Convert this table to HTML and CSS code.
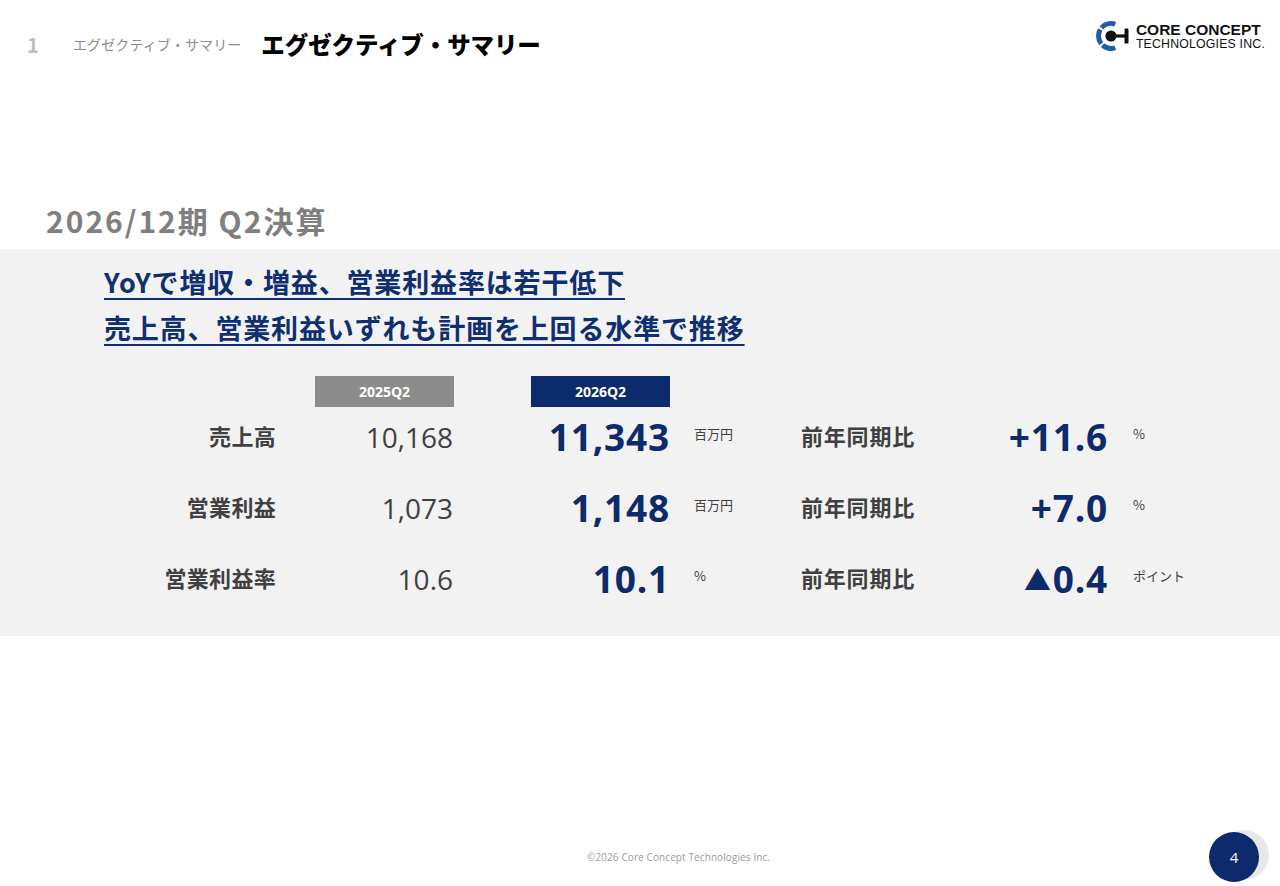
FILE: index.html
```html
<!DOCTYPE html>
<html lang="ja">
<head>
<meta charset="utf-8">
<title>エグゼクティブ・サマリー</title>
<link rel="stylesheet" href="styles.css">
</head>
<body>
<div class="slide">
  <header class="top">
    <span class="sec-num">1</span>
    <span class="sec-sub">エグゼクティブ・サマリー</span>
    <h1 class="sec-title">エグゼクティブ・サマリー</h1>
    <div class="logo">
      <svg class="logo-mark" width="36" height="34" viewBox="0 0 36 34">
        <path d="M21.28 5.25 A12.5 12.5 0 1 0 21.28 28.75" fill="none" stroke="#1f5da8" stroke-width="5" stroke-dasharray="15 2 15 2 16"/>
        <circle cx="17" cy="17" r="5.6" fill="#111"/>
        <rect x="17" y="15.4" width="14" height="3.2" fill="#111"/>
        <rect x="30.5" y="9.5" width="4" height="15" rx="1.2" fill="#111"/>
      </svg>
      <div class="logo-text">
        <span class="logo-l1">CORE CONCEPT</span>
        <span class="logo-l2">TECHNOLOGIES INC.</span>
      </div>
    </div>
  </header>

  <h2 class="period">2026/12期 Q2決算</h2>

  <section class="panel">
    <div class="headline">
      <p>YoYで増収・増益、営業利益率は若干低下</p>
      <p>売上高、営業利益いずれも計画を上回る水準で推移</p>
    </div>

    <div class="kpi">
      <div></div>
      <div class="cell-r"><span class="tag tag-prev">2025Q2</span></div>
      <div class="cell-r"><span class="tag tag-cur">2026Q2</span></div>
      <div></div><div></div><div></div><div></div>

      <div class="label">売上高</div>
      <div class="prev">10,168</div>
      <div class="cur">11,343</div>
      <div class="unit">百万円</div>
      <div class="label2">前年同期比</div>
      <div class="cur">+11.6</div>
      <div class="unit2">%</div>

      <div class="label">営業利益</div>
      <div class="prev">1,073</div>
      <div class="cur">1,148</div>
      <div class="unit">百万円</div>
      <div class="label2">前年同期比</div>
      <div class="cur">+7.0</div>
      <div class="unit2">%</div>

      <div class="label">営業利益率</div>
      <div class="prev">10.6</div>
      <div class="cur">10.1</div>
      <div class="unit">%</div>
      <div class="label2">前年同期比</div>
      <div class="cur"><span class="tri">▲</span>0.4</div>
      <div class="unit2">ポイント</div>
    </div>
  </section>

  <footer class="foot">
    <span class="copy">©2026 Core Concept Technologies Inc.</span>
    <span class="page">4</span>
  </footer>
</div>
</body>
</html>
```

FILE: styles.css
```css
* { box-sizing: border-box; }
html, body { margin: 0; padding: 0; }
body {
  background: #ffffff;
  font-family: "Open Sans", "Noto Sans CJK JP", sans-serif;
  color: #404040;
}
.slide {
  width: 1280px;
  height: 886px;
  display: flex;
  flex-direction: column;
  overflow: hidden;
}

/* header */
.top {
  height: 88px;
  display: flex;
  align-items: center;
  padding: 0 15px 0 27px;
}
.sec-num {
  width: 46px;
  font-family: "Noto Sans CJK JP", sans-serif;
  font-weight: 700;
  font-size: 20px;
  color: #bfbfbf;
}
.sec-sub {
  font-family: "Noto Sans CJK JP", sans-serif;
  font-size: 14px;
  color: #8c8c8c;
  margin-right: 20px;
  letter-spacing: 0.1px;
}
.sec-title {
  margin: 0;
  font-family: "Noto Sans CJK JP", sans-serif;
  font-weight: 900;
  font-size: 23.5px;
  color: #000;
  letter-spacing: -0.1px;
}
.logo {
  margin-left: auto;
  align-self: flex-start;
  margin-top: 19px;
  display: flex;
  align-items: center;
  gap: 6px;
  margin-right: 0;
}
.logo-mark { display: block; }
.logo-text {
  display: flex;
  flex-direction: column;
  font-family: "Liberation Sans", sans-serif;
  color: #111;
  line-height: 1;
}
.logo-l1 { font-weight: 700; font-size: 15.5px; letter-spacing: 0px; }
.logo-l2 { font-size: 12.3px; margin-top: 1px; letter-spacing: 0.2px; }

/* period title */
.period {
  margin: 112px 0 0 0;
  padding-left: 46px;
  height: 40px;
  line-height: 40px;
  font-family: "Noto Sans CJK JP", sans-serif;
  font-weight: 700;
  font-size: 30px;
  letter-spacing: 2px;
  color: #7f7f7f;
}

/* grey panel */
.panel {
  margin-top: 9px;
  background: #f2f2f2;
  padding: 10px 0 16px 0;
}
.headline { padding-left: 104px; }
.headline p {
  margin: 0;
  line-height: 46px;
  font-family: "Noto Sans CJK JP", sans-serif;
  font-weight: 700;
  font-size: 27px;
  letter-spacing: 0.85px;
  color: #0f2f70;
  text-decoration: underline;
  text-decoration-thickness: 2px;
  text-underline-offset: 5px;
}

.kpi {
  margin-top: 25px;
  margin-left: 100px;
  display: grid;
  grid-template-columns: 176px 178px 216px 131px 200px 107px 160px;
  grid-template-rows: 31px repeat(3, 71px);
  align-items: start;
}
.cell-r { display: flex; justify-content: flex-end; }
.tag {
  width: 139px;
  height: 31px;
  line-height: 31px;
  text-align: center;
  color: #fff;
  font-family: "Open Sans", sans-serif;
  font-weight: 700;
  font-size: 14px;
}
.tag-prev { background: #8c8c8c; }
.tag-cur { background: #0c2a6c; }

.label, .label2, .prev, .cur, .unit, .unit2 {
  line-height: 56px;
  height: 60px;
  white-space: nowrap;
}
.label {
  text-align: right;
  font-family: "Noto Sans CJK JP", sans-serif;
  font-weight: 700;
  font-size: 22px;
  letter-spacing: 0.3px;
  color: #404040;
}
.label2 {
  font-family: "Noto Sans CJK JP", sans-serif;
  font-weight: 700;
  font-size: 22px;
  letter-spacing: 0.8px;
  color: #404040;
}
.prev {
  line-height: 60px;
  text-align: right;
  font-size: 28px;
  color: #404040;
  padding-right: 1px;
}
.cur {
  line-height: 60px;
  text-align: right;
  font-weight: 700;
  font-size: 37px;
  letter-spacing: 0.8px;
  color: #0c2a6c;
  padding-right: 0;
}
.tri {
  font-size: 27px;
  vertical-align: 2px;
  margin-right: 1px;
}
.unit, .unit2 {
  font-family: "Noto Sans CJK JP", sans-serif;
  font-size: 13px;
  color: #404040;
  line-height: 54px;
}
.unit { padding-left: 24px; }
.unit2 { padding-left: 25px; }

/* footer */
.foot {
  margin-top: auto;
  height: 54px;
  padding-bottom: 4px;
  display: flex;
  align-items: center;
}
.copy {
  margin-left: 587px;
  font-family: "Open Sans", sans-serif;
  font-size: 10px;
  letter-spacing: 0.1px;
  color: #9a9a9a;
}
.page {
  margin-left: auto;
  margin-right: 21px;
  width: 50px;
  height: 50px;
  border-radius: 50%;
  background: #0c2a6c;
  color: #fff;
  font-family: "Open Sans", sans-serif;
  font-size: 15px;
  display: flex;
  align-items: center;
  justify-content: center;
  box-shadow: 10px -2px 0 #e8e8e8;
}
```
